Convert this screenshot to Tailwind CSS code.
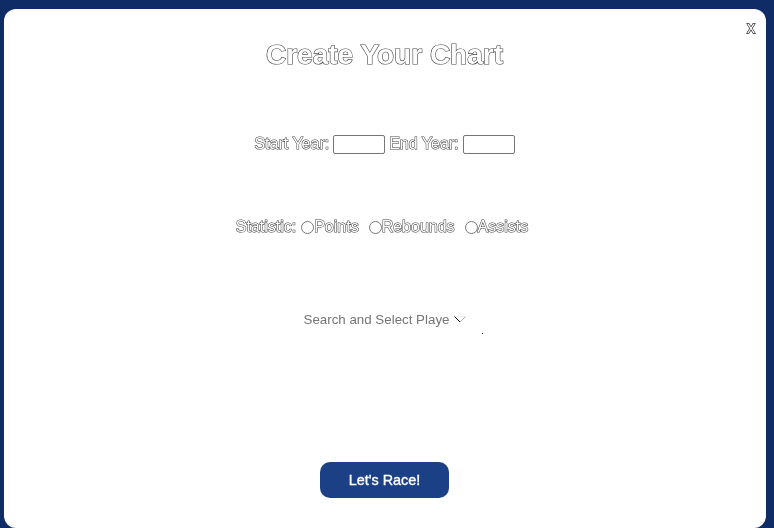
<!DOCTYPE html>
<html lang="en">
<head>
<meta charset="utf-8">
<title>Create Your Chart</title>
<script src="https://cdn.jsdelivr.net/npm/@tailwindcss/browser@4"></script>
</head>
<body class="h-[528px] overflow-hidden bg-[#102c66] pt-[9px] pl-1 pr-2 font-['Liberation_Sans',Arial,sans-serif]">
<main class="flex h-[519px] w-[762px] flex-col items-center rounded-[12px] bg-white pr-px text-[16px] leading-5 text-white will-change-transform">
  <div class="flex h-[29px] w-full justify-end pt-[9px] pr-[10px]">
    <button class="h-5 text-[16px] leading-5 text-white [-webkit-text-stroke:1.3px_#222] [paint-order:stroke_fill]" aria-label="Close">x</button>
  </div>
  <h1 class="h-[34px] whitespace-nowrap text-[28px] font-bold leading-[34px] text-white [-webkit-text-stroke:1.2px_#444] [paint-order:stroke_fill]">Create Your Chart</h1>
  <div class="mt-[62px] flex h-5 items-center gap-1 whitespace-nowrap">
    <label for="start" class="[-webkit-text-stroke:1.1px_#444] [paint-order:stroke_fill]">Start Year:</label>
    <input id="start" class="h-[19px] w-[52px] rounded-[2px] border border-[#767676] bg-white">
    <label for="end" class="[-webkit-text-stroke:1.1px_#444] [paint-order:stroke_fill]">End Year:</label>
    <input id="end" class="h-[19px] w-[52px] rounded-[2px] border border-[#767676] bg-white">
  </div>
  <div class="mt-[63px] mr-[5px] flex h-5 items-center whitespace-nowrap">
    <span class="mr-[5px] [-webkit-text-stroke:1.1px_#444] [paint-order:stroke_fill]">Statistic:</span>
    <label class="mr-[10px] flex items-center"><input type="radio" name="stat" class="size-[13px] appearance-none rounded-full border border-[#767676]"><span class="[-webkit-text-stroke:1.1px_#444] [paint-order:stroke_fill]">Points</span></label>
    <label class="mr-[10px] flex items-center"><input type="radio" name="stat" class="size-[13px] appearance-none rounded-full border border-[#767676]"><span class="[-webkit-text-stroke:1.1px_#444] [paint-order:stroke_fill]">Rebounds</span></label>
    <label class="flex items-center"><input type="radio" name="stat" class="size-[13px] appearance-none rounded-full border border-[#767676]"><span class="[-webkit-text-stroke:1.1px_#444] [paint-order:stroke_fill]">Assists</span></label>
  </div>
  <div class="mt-[73px] flex h-5 w-[162px] items-center justify-between">
    <span class="w-[147px] overflow-hidden whitespace-nowrap text-[13.33px] text-[#757575]">Search and Select Playe</span>
    <svg class="h-[8px] w-[12px]" viewBox="0 0 12 8" fill="none"><path d="M.5.5 6 6" stroke="#111"/><path d="m6 6 5.5-5.5" stroke="#999" stroke-width=".8"/><path d="M1 .5h10" stroke="#ddd" stroke-width=".5"/></svg>
  </div>
  <div class="mt-[3px] ml-[196px] size-px bg-[#333]"></div>
  <button class="mt-[128px] h-9 w-[129px] rounded-[10px] bg-[#1c4086] text-[14.4px] text-white [-webkit-text-stroke:0.35px_white]">Let's Race!</button>
</main>
</body>
</html>
